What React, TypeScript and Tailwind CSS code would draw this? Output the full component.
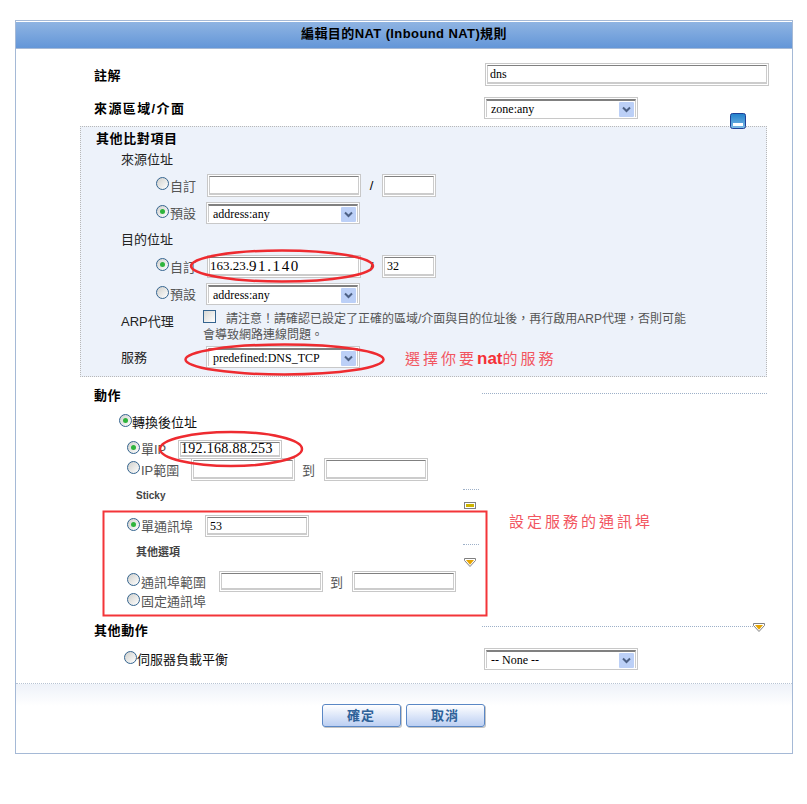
import React from "react";

const sans = "font-['Liberation_Sans','Noto_Sans_CJK_TC',sans-serif]";
const serif = "font-['Liberation_Serif','Noto_Sans_CJK_TC',serif]";

function Field({ w, h = 23, children }: { w: number; h?: number; children?: React.ReactNode }) {
  return (
    <div style={{ width: w, height: h }} className="shrink-0 border border-[#c8c8c8] p-[1px] bg-white">
      <div className={`h-full border border-[#cccccc] border-t-[#808080] border-b-2 bg-white flex items-center pl-[2px] text-[12px] text-black whitespace-nowrap overflow-hidden ${serif}`}>
        {children}
      </div>
    </div>
  );
}

function Select({ value, w = 154 }: { value: string; w?: number }) {
  return (
    <div style={{ width: w }} className="shrink-0 h-[22px] border border-[#c8c8c8] p-[1px] bg-white">
      <div className={`h-full border-t-2 border-l border-r border-[#cccccc] border-t-[#808080] bg-white flex items-center justify-between pl-[4px] pr-[1px] text-[12px] text-black whitespace-nowrap ${serif}`}>
        <span>{value}</span>
        <span className="w-[15px] h-[15px] bg-[#bcd0f7] rounded-[1px] flex items-center justify-center">
          <svg width="9" height="7" viewBox="0 0 9 7">
            <path d="M1 1.5 L4.5 5 L8 1.5" fill="none" stroke="#4d6185" strokeWidth="2" />
          </svg>
        </span>
      </div>
    </div>
  );
}

function Radio({ on }: { on?: boolean }) {
  return (
    <span className="shrink-0 w-[13px] h-[13px] mb-[4px] rounded-full border border-[#34648f] bg-gradient-to-br from-[#d0d0cc] to-white flex items-center justify-center">
      {on && <span className="w-[5px] h-[5px] rounded-full bg-[#2fb43c]" />}
    </span>
  );
}

function Opt({ on, label, w, dark }: { on?: boolean; label: string; w: number; dark?: boolean }) {
  return (
    <>
      <Radio on={on} />
      <span style={{ width: w }} className={`shrink-0 pt-[2px] whitespace-nowrap text-[13px] ${dark ? "text-[#111]" : "pl-[1px] text-[#555]"}`}>
        {label}
      </span>
    </>
  );
}

function Tri() {
  return (
    <svg width="12" height="9" viewBox="0 0 12 9" className="block shrink-0">
      <path d="M0.5 0.5 H11.5 V2.5 L6 8.5 L0.5 2.5 Z" fill="#fff" stroke="#808080" />
      <path d="M2 2 H10 L6 6.8 Z" fill="#e6a400" />
    </svg>
  );
}

function Minus() {
  return (
    <svg width="12" height="7" viewBox="0 0 12 7" className="block shrink-0">
      <rect x="0.5" y="0.5" width="11" height="6" fill="#fff" stroke="#808080" />
      <rect x="2" y="2" width="8" height="3" fill="#cdb400" />
    </svg>
  );
}

const Bold = ({ children, w, flush }: { children: React.ReactNode; w?: number; flush?: boolean }) => (
  <span style={{ width: w }} className={`shrink-0 ${flush ? "" : "pt-[2px]"} text-[13px] font-bold tracking-[0.6px] text-black whitespace-nowrap`}>
    {children}
  </span>
);

const Sub = ({ children }: { children: React.ReactNode }) => (
  <div className="h-[18px] flex items-center pl-[40px] pt-[2px] text-[13px] text-[#222]">{children}</div>
);

const Dots = ({ w }: { w: number }) => (
  <div style={{ width: w }} className="h-0 border-t border-dotted border-[#9db0c8]" />
);

export default function App() {
  return (
    <div className={`relative w-[807px] h-[804px] bg-white pt-[20px] pl-[15px] ${sans}`}>
      <div className="w-[778px] h-[734px] border border-[#a5b9d6] flex flex-col">
        <div className="mt-[1px] h-[27px] shrink-0 border-b border-[#a5b9d6] bg-gradient-to-b from-[#8fb4e2] to-[#6396d8] flex items-center justify-center text-[13px] font-bold tracking-[0.4px] text-black pb-[2px]">
          編輯目的NAT (Inbound NAT)規則
        </div>

        <div className="mt-[14px] h-[23px] shrink-0 flex items-center pl-[78px]">
          <Bold w={391}>註解</Bold>
          <Field w={284}>dns</Field>
        </div>
        <div className="mt-[11px] h-[22px] shrink-0 flex items-center pl-[78px]">
          <Bold w={390}><span className="tracking-[1.4px]">來源區域/介面</span></Bold>
          <Select value="zone:any" />
        </div>

        <div className="relative mt-[7px] ml-[64px] w-[687px] h-[251px] shrink-0 border border-dotted border-[#b8b8b8] bg-[#edf2fa] flex flex-col">
          <svg width="16" height="16" viewBox="0 0 16 16" className="absolute left-[649px] top-[-14px]">
            <defs>
              <linearGradient id="mg" x1="0" y1="0" x2="0" y2="1">
                <stop offset="0" stopColor="#1f7fcb" />
                <stop offset="1" stopColor="#7ebbe6" />
              </linearGradient>
            </defs>
            <rect x="0.5" y="0.5" width="15" height="15" rx="2" fill="url(#mg)" stroke="#1d3f96" />
            <rect x="3" y="10" width="10" height="3" fill="#fff" />
          </svg>

          <div className="mt-[3px] h-[18px] flex items-center pl-[15px]"><Bold flush>其他比對項目</Bold></div>
          <div className="mt-[2px]"><Sub>來源位址</Sub></div>

          <div className="mt-[6px] h-[23px] flex items-center pl-[75px]">
            <Opt label="自訂" w={38} />
            <Field w={154} />
            <span className="w-[21px] text-center text-[13px] text-black">/</span>
            <Field w={54} />
          </div>
          <div className="mt-[5px] h-[22px] flex items-center pl-[75px]">
            <Opt on label="預設" w={37} />
            <Select value="address:any" />
          </div>

          <div className="mt-[6px]"><Sub>目的位址</Sub></div>

          <div className="mt-[7px] h-[23px] flex items-center pl-[75px]">
            <Opt on label="自訂" w={38} />
            <Field w={154}>
              <span className="text-[13px] -ml-[2px]">163.23.</span>
              <span className="text-[15px] tracking-[1.6px]">91.140</span>
            </Field>
            <span className="w-[21px] text-center text-[13px] text-black">/</span>
            <Field w={54}>32</Field>
          </div>
          <div className="mt-[5px] h-[22px] flex items-center pl-[75px]">
            <Opt label="預設" w={37} />
            <Select value="address:any" />
          </div>

          <div className="mt-[5px] h-[32px] flex items-start pl-[40px]">
            <span className="mt-[3px] pt-[2px] w-[82px] h-[16px] flex items-center text-[13px] text-[#222]">ARP代理</span>
            <div className="w-[500px] pt-[1px] text-[12px] leading-[16px] text-[#555] whitespace-nowrap">
              <div className="flex items-start">
                <span className="shrink-0 -mt-[1px] mr-[10px] w-[13px] h-[13px] border border-[#34648f] bg-gradient-to-br from-[#d8d8d4] to-white" />
                請注意！請確認已設定了正確的區域/介面與目的位址後，再行啟用ARP代理，否則可能
              </div>
              <div>會導致網路連線問題。</div>
            </div>
          </div>

          <div className="mt-[4px] h-[22px] flex items-center pl-[40px]">
            <span className="w-[85px] pt-[2px] text-[13px] text-[#222]">服務</span>
            <Select value="predefined:DNS_TCP" />
            <span className="ml-[45px] pt-[3px] text-[15px] tracking-[3px] text-[#f2555f] whitespace-nowrap">
              選擇你要<span className="text-[17px] font-bold tracking-normal text-[#f53036]">nat</span>的服務
            </span>
          </div>
        </div>

        <div className="mt-[9px] h-[18px] shrink-0 flex items-start pl-[78px]">
          <Bold flush w={388}>動作</Bold>
          <div className="mt-[7px]"><Dots w={285} /></div>
        </div>

        <div className="mt-[9px] h-[18px] shrink-0 flex items-center pl-[103px]">
          <Opt on dark label="轉換後位址" w={72} />
        </div>

        <div className="mt-[9px] h-[18px] shrink-0 flex items-center pl-[111px]">
          <Opt on label="單IP" w={38} />
          <Field w={104} h={19}>
            <span className="text-[14px] tracking-[0.3px] -ml-[2px]">192.168.88.253</span>
          </Field>
        </div>

        <div className="h-[23px] shrink-0 flex items-center pl-[111px]">
          <Opt label="IP範圍" w={51} />
          <Field w={104} />
          <span className="ml-[7px] w-[22px] pt-[2px] text-[13px] text-[#555]">到</span>
          <Field w={104} />
        </div>

        <div className="h-[30px] shrink-0 flex items-start pl-[120px]">
          <span className="mt-[7px] h-[14px] w-[327px] flex items-center text-[10px] font-bold text-[#444]">Sticky</span>
          <div className="flex flex-col">
            <div className="mt-[8px]"><Dots w={16} /></div>
            <div className="mt-[12px] ml-[1px]"><Minus /></div>
          </div>
        </div>

        <div className="mt-[4px] h-[22px] shrink-0 flex items-center pl-[111px]">
          <Opt on label="單通訊埠" w={65} />
          <Field w={104} h={22}>53</Field>
          <span className="ml-[200px] -mt-[8px] text-[15px] tracking-[3px] text-[#f2555f] whitespace-nowrap">設定服務的通訊埠</span>
        </div>

        <div className="h-[34px] shrink-0 flex items-start pl-[120px]">
          <span className="mt-[8px] h-[14px] w-[327px] flex items-center text-[11px] font-bold text-[#444]">其他選項</span>
          <div className="flex flex-col">
            <div className="mt-[7px]"><Dots w={16} /></div>
            <div className="mt-[13px] ml-[1px]"><Tri /></div>
          </div>
        </div>

        <div className="h-[21px] shrink-0 flex items-center pl-[111px]">
          <Opt label="通訊埠範圍" w={79} />
          <Field w={104} h={21} />
          <span className="ml-[7px] w-[22px] pt-[2px] text-[13px] text-[#555]">到</span>
          <Field w={104} h={21} />
        </div>

        <div className="h-[18px] shrink-0 flex items-center pl-[111px]">
          <Opt label="固定通訊埠" w={72} />
        </div>

        <div className="mt-[11px] h-[18px] shrink-0 flex items-start pl-[78px]">
          <Bold flush w={388}>其他動作</Bold>
          <div className="mt-[5px]"><Dots w={271} /></div>
          <div className="mt-[2px]"><Tri /></div>
        </div>

        <div className="mt-[9px] h-[22px] shrink-0 flex items-center pl-[108px]">
          <Opt dark label="伺服器負載平衡" w={347} />
          <Select value="-- None --" />
        </div>

        <div className="mt-[13px] shrink-0 h-0 border-t border-dotted border-[#b8c4d4]" />
        <div className="flex-1 pt-[20px] pr-[2px] flex justify-center gap-[5px] bg-[linear-gradient(#eef2f9,#ffffff_22px)]">
          {["確定", "取消"].map((t) => (
            <div
              key={t}
              className="w-[79px] h-[23px] rounded-[3px] border border-[#5a87c5] bg-gradient-to-b from-white to-[#bccff2] shadow-[1px_1px_0_#c4c4c4] flex items-center justify-center text-[13px] font-bold tracking-[1px] text-[#2f6299]"
            >
              {t}
            </div>
          ))}
        </div>
      </div>

      <svg width="807" height="804" className="absolute inset-0 pointer-events-none" fill="none" stroke="#ee2b30" strokeWidth="2.5">
        <ellipse cx="282" cy="266" rx="91" ry="15.5" />
        <ellipse cx="284.5" cy="359.5" rx="99" ry="15" />
        <ellipse cx="231" cy="449" rx="71" ry="17" />
        <rect x="103.5" y="511.5" width="383" height="104" strokeWidth="2" stroke="#f33539" />
      </svg>
    </div>
  );
}
